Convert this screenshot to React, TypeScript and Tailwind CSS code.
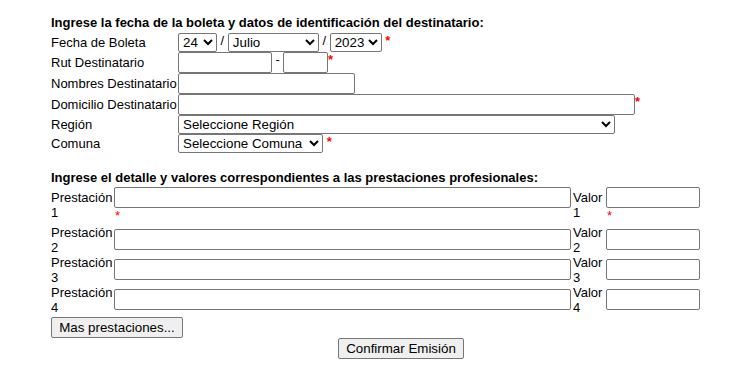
import React from "react";

const ctl =
  "border border-[#767676] rounded-[2px] bg-white text-[13.333px] text-black align-top";
const sel =
  "border border-[#767676] rounded-[2px] bg-white text-[13.333px] text-black h-[19px] align-top";
const btn =
  "border border-[#767676] rounded-[2px] bg-[#efefef] text-[13.333px] text-black h-[21px] leading-[19px]";

function Req({ bold = false }: { bold?: boolean }) {
  return <span className={bold ? "text-[#ff0000] font-bold" : "text-[#ff0000]"}>*</span>;
}

function Row({ label, h, children }: { label: string; h: string; children: React.ReactNode }) {
  return (
    <div className={`flex items-center ${h}`}>
      <div className="w-[127px] shrink-0 leading-[15px]">{label}</div>
      <div className="whitespace-nowrap leading-[15px]">{children}</div>
    </div>
  );
}

function Prestacion({ n, first = false }: { n: number; first?: boolean }) {
  return (
    <div className={first ? "flex h-[40px] items-start" : "flex h-[30px] items-start"}>
      <div className={first ? "w-[63px] shrink-0 self-center leading-[15px]" : "w-[63px] shrink-0 leading-[15px]"}>
        Prestación
        <br />
        {n}
      </div>
      <div className={first ? "w-[457px] shrink-0 pt-[2px]" : "w-[457px] shrink-0 pt-[4px]"}>
        <input type="text" className={`${ctl} w-[457px] h-[21px] block`} />
        {first && (
          <div className="leading-[15px] pl-[1px]">
            <Req />
          </div>
        )}
      </div>
      <div className={first ? "w-[35px] shrink-0 pl-[2px] self-center leading-[15px]" : "w-[35px] shrink-0 pl-[2px] leading-[15px]"}>
        Valor
        <br />
        {n}
      </div>
      <div className={first ? "w-[94px] shrink-0 pt-[2px]" : "w-[94px] shrink-0 pt-[4px]"}>
        <input type="text" className={`${ctl} w-[94px] h-[21px] block`} />
        {first && (
          <div className="leading-[15px] pl-[1px]">
            <Req />
          </div>
        )}
      </div>
    </div>
  );
}

export default function App() {
  return (
    <div className="min-h-[365px] w-[755px] bg-white pl-[51px] pt-[15px] font-['Liberation_Sans',Arial,sans-serif] text-[13px] text-black">
      {/* datos del destinatario */}
      <div className="font-bold leading-[15px]">
        Ingrese la fecha de la boleta y datos de identificación del destinatario:
      </div>
      <div className="mt-[3px]">
        <Row label="Fecha de Boleta" h="h-[19px]">
          <select className={`${sel} w-[39px]`} defaultValue="24">
            <option>24</option>
          </select>
          {" / "}
          <select className={`${sel} w-[91px]`} defaultValue="Julio">
            <option>Julio</option>
          </select>
          {" / "}
          <select className={`${sel} w-[52px]`} defaultValue="2023">
            <option>2023</option>
          </select>{" "}
          <Req bold />
        </Row>
        <Row label="Rut Destinatario" h="h-[21px]">
          <input type="text" className={`${ctl} w-[94px] h-[21px]`} />
          {" -"}
          <input type="text" className={`${ctl} ml-[3px] w-[45px] h-[21px]`} />
          <Req bold />
        </Row>
        <Row label="Nombres Destinatario" h="h-[21px]">
          <input type="text" className={`${ctl} w-[177px] h-[21px]`} />
        </Row>
        <Row label="Domicilio Destinatario" h="h-[21px]">
          <input type="text" className={`${ctl} w-[457px] h-[21px]`} />
          <Req bold />
        </Row>
        <Row label="Región" h="h-[19px]">
          <select className={`${sel} w-[437px]`} defaultValue="r">
            <option value="r">Seleccione Región</option>
          </select>
        </Row>
        <Row label="Comuna" h="h-[19px]">
          <select className={`${sel} w-[145px]`} defaultValue="c">
            <option value="c">Seleccione Comuna</option>
          </select>{" "}
          <Req bold />
        </Row>
      </div>

      {/* prestaciones */}
      <div className="mt-[17px] font-bold leading-[15px]">
        Ingrese el detalle y valores correspondientes a las prestaciones profesionales:
      </div>
      <Prestacion n={1} first />
      <Prestacion n={2} />
      <Prestacion n={3} />
      <Prestacion n={4} />
      <button className={`${btn} mt-[2px] block w-[132px]`}>Mas prestaciones...</button>
      <button className={`${btn} ml-[287px] block w-[126px]`}>Confirmar Emisión</button>
    </div>
  );
}
